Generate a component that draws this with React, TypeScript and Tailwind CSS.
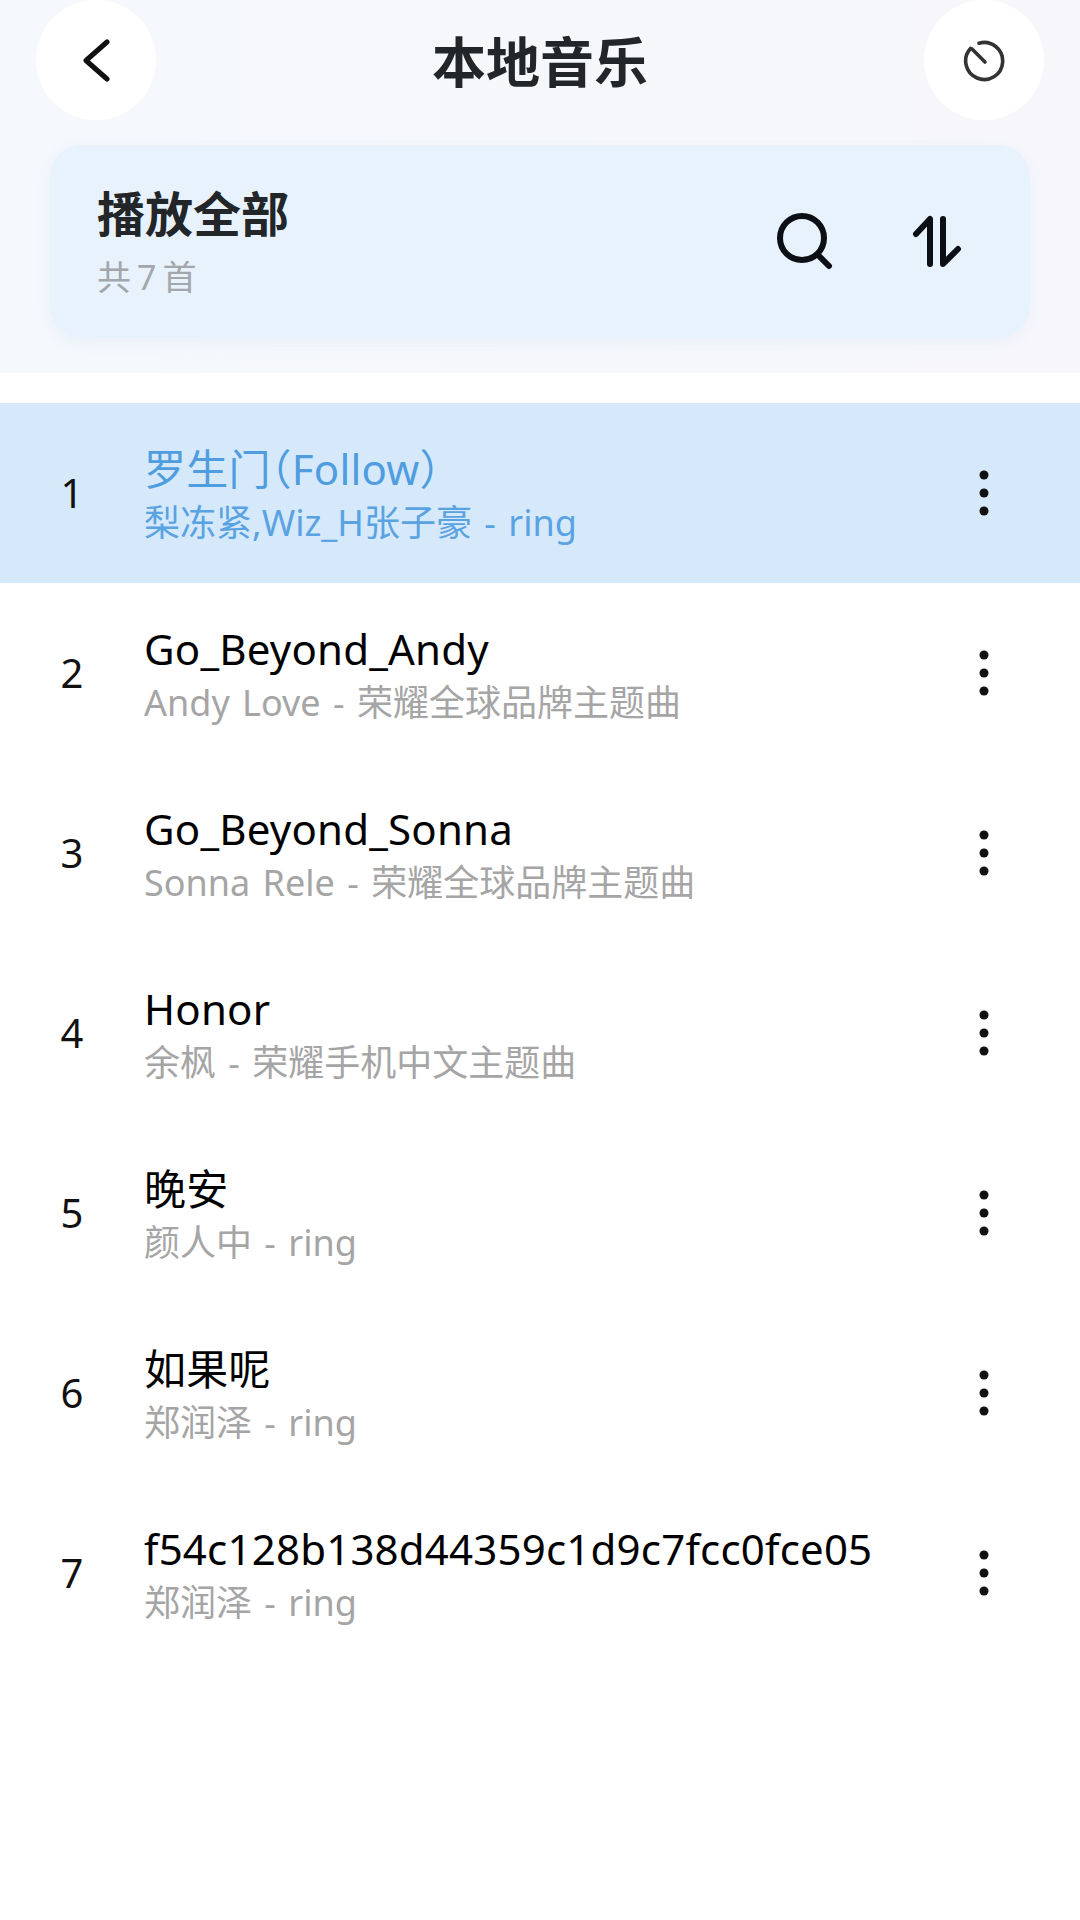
const songs = [
  { title: "罗生门（Follow）", sub: "梨冻紧,Wiz_H张子豪 - ring" },
  { title: "Go_Beyond_Andy", sub: "Andy Love - 荣耀全球品牌主题曲" },
  { title: "Go_Beyond_Sonna", sub: "Sonna Rele - 荣耀全球品牌主题曲" },
  { title: "Honor", sub: "余枫 - 荣耀手机中文主题曲" },
  { title: "晚安", sub: "颜人中 - ring" },
  { title: "如果呢", sub: "郑润泽 - ring" },
  { title: "f54c128b138d44359c1d9c7fcc0fce05", sub: "郑润泽 - ring" },
];

function MoreDots() {
  return (
    <svg width="12" height="50" viewBox="0 0 12 50" fill="#111">
      <circle cx="6" cy="7" r="4.5" />
      <circle cx="6" cy="25" r="4.5" />
      <circle cx="6" cy="43" r="4.5" />
    </svg>
  );
}

function SongRow({ index, title, sub, active }: { index: number; title: string; sub: string; active: boolean }) {
  return (
    <div className={active ? "flex h-[180px] items-center bg-[#d6e9fb]" : "flex h-[180px] items-center"}>
      <div className="w-[144px] text-center text-[40px] leading-none text-[#111]">{index}</div>
      <div className="min-w-0 flex-1 pt-[6px]">
        <div
          className={
            active
              ? 'text-[42px] leading-[54px] tracking-[0.2px] text-[#4f9ddf] [font-feature-settings:"halt"]'
              : 'text-[42px] leading-[54px] tracking-[0.2px] text-black [font-feature-settings:"halt"]'
          }
        >
          {title}
        </div>
        <div
          className={
            active
              ? "text-[36px] leading-[54px] text-[#5aa3e2] [word-spacing:3px]"
              : "text-[36px] leading-[54px] text-[#a5a5a5] [word-spacing:3px]"
          }
        >
          {sub}
        </div>
      </div>
      <div className="flex w-[192px] justify-center">
        <MoreDots />
      </div>
    </div>
  );
}

export default function App() {
  return (
    <div
      className="h-[1920px] w-[1080px] overflow-hidden bg-white"
      style={{ fontFamily: '"Noto Sans", "Noto Sans CJK SC", sans-serif' }}
    >
      <header className="h-[373px] bg-gradient-to-r from-[#f5f8fc] to-[#f7f7fb]">
        <div className="flex h-[120px] items-center justify-between px-[36px]">
          <button type="button" className="flex h-[120px] w-[120px] items-center justify-center rounded-full bg-white">
            <svg width="30" height="44" viewBox="0 0 30 44" fill="none" stroke="#111" strokeWidth="5" strokeLinecap="round" strokeLinejoin="round">
              <path d="M26 4 L5 22.5 L26 41" />
            </svg>
          </button>
          <h1 className="pt-[4px] text-[54px] leading-none font-bold text-[#222628]">本地音乐</h1>
          <button type="button" className="flex h-[120px] w-[120px] items-center justify-center rounded-full bg-white">
            <svg width="44" height="44" viewBox="0 0 44 44" fill="none" stroke="#333" strokeWidth="3.6" strokeLinecap="round" className="mt-[2px]">
              <path d="M17 4.2 A18.5 18.5 0 1 1 8.5 9.5" />
              <path d="M10 10 L23 23" />
            </svg>
          </button>
        </div>
        <div className="mx-[50px] mt-[25px] flex h-[193px] items-center justify-between rounded-[32px] bg-[#e8f2fd] pr-[68px] pl-[47px] shadow-[0_4px_14px_rgba(225,235,248,0.6)]">
          <div>
            <div className="text-[48px] leading-[60px] font-bold text-[#222628]">播放全部</div>
            <div className="mt-[10px] text-[34px] leading-[46px] tracking-[6px] text-[#a3a7ab]">共7首</div>
          </div>
          <div className="flex items-center gap-[78px]">
            <svg width="58" height="58" viewBox="0 0 58 58" fill="none" stroke="#0c0f14" strokeWidth="6" strokeLinecap="round">
              <circle cx="26" cy="25" r="22" />
              <path d="M42 42 L53 53" />
            </svg>
            <svg width="50" height="54" viewBox="0 0 50 54" fill="none" stroke="#0c0f14" strokeWidth="6" strokeLinecap="round" strokeLinejoin="round">
              <path d="M4 19 L18 4 V49" />
              <path d="M31 4 V49 L46 34" />
            </svg>
          </div>
        </div>
      </header>
      <main className="mt-[30px]">
        {songs.map((s, i) => (
          <SongRow key={s.title} index={i + 1} title={s.title} sub={s.sub} active={i === 0} />
        ))}
      </main>
    </div>
  );
}
